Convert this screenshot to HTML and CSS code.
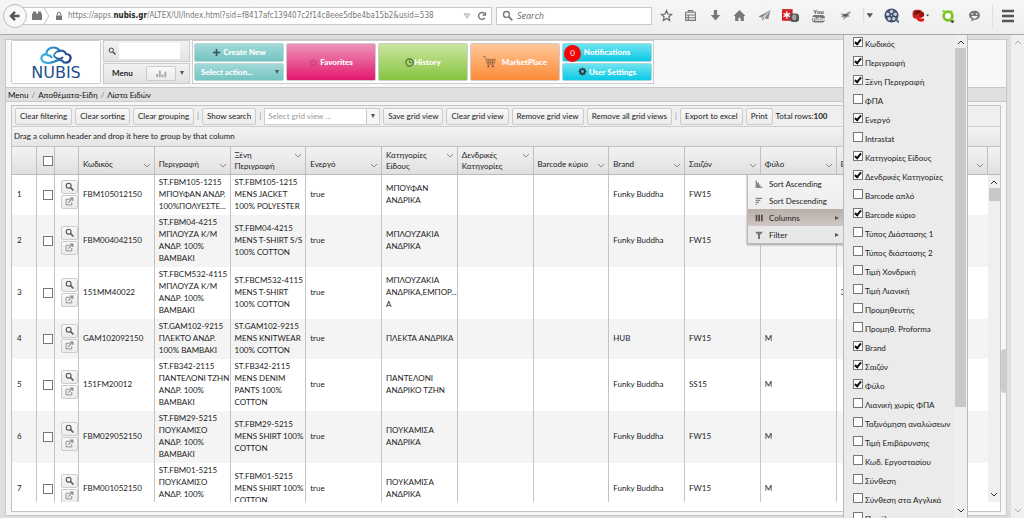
FILE: index.html
```html
<!DOCTYPE html>
<html lang="el">
<head>
<meta charset="utf-8">
<title>Λίστα Ειδών</title>
<link rel="stylesheet" href="styles.css">
</head>
<body>
<svg class="defs" aria-hidden="true">
  <symbol id="mag" viewBox="0 0 16 16"><circle cx="6.5" cy="6.5" r="4.3" fill="none" stroke="currentColor" stroke-width="2"/><path d="M10 10l5 5" stroke="currentColor" stroke-width="2.6"/></symbol>
  <symbol id="ext" viewBox="0 0 16 16"><path d="M9 4H2v10h10V9" fill="none" stroke="currentColor" stroke-width="1.600"/><path d="M6 10l7-7M9 2h5v5" fill="none" stroke="currentColor" stroke-width="2"/></symbol>
  <symbol id="chev" viewBox="0 0 8 6"><path d="M1 1l3 3 3-3" fill="none" stroke="currentColor"/></symbol>
  <symbol id="gear" viewBox="0 0 16 16"><circle cx="8" cy="8" r="4" fill="none" stroke="currentColor" stroke-width="3"/><path d="M8 1v3M8 12v3M1 8h3M12 8h3M3 3l2 2M11 11l2 2M13 3l-2 2M5 11l-2 2" stroke="currentColor" stroke-width="2.400"/></symbol>
</svg>

<header class="browser">
  <button class="back" aria-label="Back"><svg viewBox="0 0 24 24"><path d="M20 12H6M12 5l-7 7 7 7" fill="none" stroke="#555" stroke-width="4"/></svg></button>
  <div class="address">
    <svg class="ident" viewBox="0 0 24 24"><path d="M2 7h20v13H2zM4 3h6v4H4zM14 3h6v4h-6z" fill="#777"/></svg>
    <svg class="sep" viewBox="0 0 6 18"><path d="M0 0l5 9-5 9" fill="none" stroke="#bbb"/></svg>
    <svg class="lock" viewBox="0 0 16 18"><path d="M2 8h12v9H2z" fill="#777"/><path d="M4.500 8V5a3.500 3.500 0 0 1 7 0v3" fill="none" stroke="#777" stroke-width="2"/></svg>
    <span class="url">https://apps.<b>nubis.gr</b>/ALTEX/UI/Index.html?sid=f8417afc139407c2f14c8eee5dbe4ba15b2&amp;usid=538</span>
    <svg class="tri" viewBox="0 0 10 8"><path d="M1 1h8L5 7z" fill="#ddd" stroke="#aaa"/></svg>
    <svg class="reload" viewBox="0 0 16 16"><path d="M12.500 11A5.500 5.500 0 1 1 12 4" fill="none" stroke="#777" stroke-width="2.200"/><path d="M14.500 1v6.500H8z" fill="#777"/></svg>
  </div>
  <label class="find"><svg viewBox="0 0 16 16"><use href="#mag"/></svg><input type="text" placeholder="Search" aria-label="Search"></label>
  <nav class="tools">
    <svg viewBox="0 0 24 24"><path d="M12 3l2.700 6.300 6.800.6-5.100 4.500 1.500 6.700L12 17.600l-5.900 3.500 1.500-6.700L2.500 9.900l6.800-.6z" fill="none" stroke="#666" stroke-width="2.200"/></svg>
    <svg viewBox="0 0 24 24"><path d="M3 6h18v15H3zM8 6V3h8v3M3 11h18M3 16h18M8 11v10" fill="none" stroke="#777" stroke-width="2"/></svg>
    <svg viewBox="0 0 24 24"><path d="M9 2h6v9h6l-9 10-9-10h6z" fill="#777"/></svg>
    <svg viewBox="0 0 24 24"><path d="M12 2l11 11h-3v9h-6v-6h-4v6H4v-9H1z" fill="#777"/></svg>
    <svg viewBox="0 0 24 24"><path d="M23 2L1 14l6 2zM23 2l-4 17-9-3zM23 2L8 17v5z" fill="#888"/></svg>
    <svg class="wide" viewBox="0 0 32 26"><path d="M0 1h20v22H0z" fill="#d4202a"/><path d="M9 5v14M3 9l12 6M3 15l12-6" stroke="#fff" stroke-width="2.500"/><rect x="15" y="9" width="17" height="16" rx="6" fill="#555"/><rect x="20" y="12" width="6" height="9" rx="3" fill="#999" stroke="#ddd"/></svg>
    <svg class="wide" viewBox="0 0 32 28"><text x="16" y="12" class="yt" fill="#444">You</text><rect x="4" y="13" width="24" height="14" rx="5" fill="#777"/><text x="16" y="24" class="yt" fill="#fff">Tube</text></svg>
    <svg viewBox="0 0 24 24"><path d="M3 8l8 1 9-5 2 2-5 5 4 2-8 3-6 4 2-5-6 0 3-3z" fill="#999"/><path d="M9 9l8 1-3 4-6-1z" fill="#555"/></svg>
    <svg class="caret" viewBox="0 0 14 20"><path d="M1 0v20" stroke="#ccc"/><path d="M5 7h9l-4.500 6z" fill="#555"/></svg>
    <svg class="reel" viewBox="0 0 32 32"><path d="M20 25h8v5" fill="none" stroke="#536581" stroke-width="3"/><circle cx="15" cy="15" r="14" fill="#3f4f6b"/><g fill="#c8d2df"><circle cx="15" cy="7" r="3.500"/><circle cx="22.500" cy="12.500" r="3.500"/><circle cx="19.500" cy="21.500" r="3.500"/><circle cx="10.500" cy="21.500" r="3.500"/><circle cx="7.500" cy="12.500" r="3.500"/><circle cx="15" cy="15" r="1.500"/></g></svg>
    <svg class="wide" viewBox="0 0 32 26"><rect x="1" y="2" width="19" height="17" rx="7" fill="#c22a20"/><path d="M4 12q6-6 13-3M5 7q5-3 10-1" stroke="#501414" stroke-width="2.500" fill="none"/><path d="M7 14q7 7 15 4l1 5q-8 4-13-1z" fill="#e01818"/><circle cx="18" cy="11" r="5" fill="#a11"/><path d="M27 11h5l-2.500 4z" fill="#333"/></svg>
    <svg class="reel" viewBox="0 0 24 24"><circle cx="12" cy="12" r="6.500" fill="#fff" stroke="#7cc221" stroke-width="4"/><path d="M4 4l4 2M18 4l-2 3M16 16l4 4" stroke="#8ed02b" stroke-width="3"/><path d="M15 19h7l-3.500 4z" fill="#333"/></svg>
    <svg viewBox="0 0 24 24"><path d="M12 3c6 0 10 3.500 10 8.500S18 20 12 20l-6 3 1-4.500C4 17 2 14.500 2 11.500 2 6.500 6 3 12 3z" fill="#777"/><circle cx="8" cy="9" r="1.500" fill="#eee"/><circle cx="16" cy="9" r="1.500" fill="#eee"/><path d="M6 13h12q-2 5-6 5t-6-5z" fill="#eee"/></svg>
    <svg class="burger" viewBox="0 0 22 22"><path d="M0 0v22" stroke="#ccc"/><path d="M10 6h12M10 11h12M10 16h12" stroke="#555" stroke-width="2.400"/></svg>
  </nav>
</header>

<div class="viewport">
  <main class="page">
    <div class="top">
      <a class="logo" href="#" aria-label="NUBIS">
        <svg viewBox="0 0 32 19"><defs><linearGradient id="g" x1="0" x2="1"><stop offset="0" stop-color="#35b4e4"/><stop offset=".5" stop-color="#2b7fbd"/><stop offset="1" stop-color="#243a82"/></linearGradient></defs><path d="M8 17C3 17 1 14 1.500 11.500 2 9 4 8 6.500 8.500 6 4 9.500 1.500 13.500 1.500c3 0 5 1.500 6 3.500 3-1 6 .5 6.500 3 3 0 5 2 4.500 4.500-.5 3-3 4.500-6.500 4-1-2-3-2.500-5-2.500-3 0-4 3-11 3z" fill="none" stroke="url(#g)" stroke-width="2.200"/><path d="M7 9c2 0 4 1 5 3M20 5c-3 0-6 2-6 5 2 3 7 4 9 1" fill="none" stroke="url(#g)" stroke-width="1.800"/></svg>
        <span>NUBIS</span>
      </a>
      <div class="quick">
        <label class="quick-search"><svg viewBox="0 0 16 16"><use href="#mag"/></svg><input type="text" aria-label="Αναζήτηση"></label>
        <div class="quick-menu"><b>Menu</b><button class="chart" aria-label="Charts"><svg viewBox="0 0 20 16"><path d="M2 15V9M7 15V3M12 15v-5M17 15V5" stroke="#aaa" stroke-width="3.500"/></svg></button><i class="arrow"></i></div>
      </div>
      <div class="tiles">
        <div class="pair teal"><button><svg viewBox="0 0 10 10"><path d="M5 1v8M1 5h8" stroke="#355" stroke-width="1.800"/></svg>Create New</button><button class="action">Select action...<i class="arrow"></i></button></div>
        <button class="tile pink"><svg viewBox="0 0 24 24"><path d="M12 3l2.700 6.300 6.800.6-5.100 4.500 1.500 6.700L12 17.600l-5.900 3.500 1.500-6.700L2.500 9.900l6.800-.6z" fill="none" stroke="#a3476b" stroke-width="2"/></svg>Favorites</button>
        <button class="tile green"><svg viewBox="0 0 16 16"><circle cx="8" cy="8" r="6.500" fill="none" stroke="#4d6a2b" stroke-width="2"/><path d="M8 4v4h4" fill="none" stroke="#4d6a2b" stroke-width="1.500"/></svg>History</button>
        <button class="tile orange"><svg class="cart" viewBox="0 0 24 22"><path d="M0 1h4l4 14h12l3-9H6M7 9h14M8 12h12M10 6v9M14 6v9M18 6v9" fill="none" stroke="#9b6a48" stroke-width="1.500"/><circle cx="10" cy="19" r="2" fill="#845"/><circle cx="18" cy="19" r="2" fill="#845"/></svg>MarketPlace</button>
        <div class="pair cyan"><button>Notifications<span class="badge">0</span></button><button><svg viewBox="0 0 16 16"><use href="#gear"/></svg>User Settings</button></div>
      </div>
    </div>
    <nav class="crumbs"><a href="#">Menu</a> <i>/</i> <a href="#">Αποθέματα-Είδη</a> <i>/</i> <a href="#">Λίστα Ειδών</a></nav>

    <section class="grid">
      <div class="toolbar">
        <button>Clear filtering</button><button>Clear sorting</button><button>Clear grouping</button><i class="bar">|</i><button>Show search</button><i class="bar">|</i>
        <div class="combo"><input type="text" placeholder="Select grid view ..." aria-label="Grid view"><button aria-label="Open"><i class="arrow"></i></button></div>
        <button>Save grid view</button><button>Clear grid view</button><button>Remove grid view</button><button>Remove all grid views</button><i class="bar">|</i><button>Export to excel</button><button>Print</button><span>Total rows:<b>100</b></span>
      </div>
      <div class="grouping">Drag a column header and drop it here to group by that column</div>
      <div class="head">
        <table>
          <colgroup><col class="n"><col class="c"><col class="o"><col span="12"></colgroup>
          <tr><th></th><th><input type="checkbox" aria-label="Select all"></th><th></th>
          <th><div>Κωδικός<svg><use href="#chev"/></svg></div></th>
          <th><div>Περιγραφή<svg><use href="#chev"/></svg></div></th>
          <th><div class="two">Ξένη<br>Περιγραφή<svg><use href="#chev"/></svg></div></th>
          <th><div>Ενεργό<svg><use href="#chev"/></svg></div></th>
          <th><div class="two">Κατηγορίες<br>Είδους<svg><use href="#chev"/></svg></div></th>
          <th><div class="two">Δενδρικές<br>Κατηγορίες<svg><use href="#chev"/></svg></div></th>
          <th><div>Barcode κύριο<svg><use href="#chev"/></svg></div></th>
          <th><div>Brand<svg><use href="#chev"/></svg></div></th>
          <th><div>Σαιζόν<svg><use href="#chev"/></svg></div></th>
          <th><div>Φύλο<svg><use href="#chev"/></svg></div></th>
          <th><div>Εποχή<svg><use href="#chev"/></svg></div></th>
          <th><div>&nbsp;<svg><use href="#chev"/></svg></div></th></tr>
        </table>
      </div>
      <div class="body">
        <div class="rows">
          <table>
            <colgroup><col class="n"><col class="c"><col class="o"><col span="12"></colgroup>
            <tr><td>1</td><td><input type="checkbox" aria-label="1"></td><td><button aria-label="View"><svg><use href="#mag"/></svg></button><button aria-label="Open"><svg><use href="#ext"/></svg></button></td><td>FBM105012150</td><td>ST.FBM105-1215<br>ΜΠΟΥΦΑΝ ΑΝΔΡ.<br>100%ΠΟΛΥΕΣΤΕ...</td><td>ST.FBM105-1215<br>MENS JACKET<br>100% POLYESTER</td><td>true</td><td>ΜΠΟΥΦΑΝ<br>ΑΝΔΡΙΚΑ</td><td></td><td></td><td>Funky Buddha</td><td>FW15</td><td></td><td></td><td></td></tr>
            <tr><td>2</td><td><input type="checkbox" aria-label="2"></td><td><button aria-label="View"><svg><use href="#mag"/></svg></button><button aria-label="Open"><svg><use href="#ext"/></svg></button></td><td>FBM004042150</td><td>ST.FBM04-4215<br>ΜΠΛΟΥΖΑ Κ/Μ<br>ΑΝΔΡ. 100%<br>ΒΑΜΒΑΚΙ</td><td>ST.FBM04-4215<br>MENS T-SHIRT S/S<br>100% COTTON</td><td>true</td><td>ΜΠΛΟΥΖΑΚΙΑ<br>ΑΝΔΡΙΚΑ</td><td></td><td></td><td>Funky Buddha</td><td>FW15</td><td></td><td></td><td></td></tr>
            <tr><td>3</td><td><input type="checkbox" aria-label="3"></td><td><button aria-label="View"><svg><use href="#mag"/></svg></button><button aria-label="Open"><svg><use href="#ext"/></svg></button></td><td>151MM40022</td><td>ST.FBCM532-4115<br>ΜΠΛΟΥΖΑ Κ/Μ<br>ΑΝΔΡ. 100%<br>ΒΑΜΒΑΚΙ</td><td>ST.FBCM532-4115<br>MENS T-SHIRT<br>100% COTTON</td><td>true</td><td>ΜΠΛΟΥΖΑΚΙΑ<br>ΑΝΔΡΙΚΑ,ΕΜΠΟΡ...<br>Α</td><td></td><td></td><td></td><td></td><td></td><td>3</td><td></td></tr>
            <tr><td>4</td><td><input type="checkbox" aria-label="4"></td><td><button aria-label="View"><svg><use href="#mag"/></svg></button><button aria-label="Open"><svg><use href="#ext"/></svg></button></td><td>GAM102092150</td><td>ST.GAM102-9215<br>ΠΛΕΚΤΟ ΑΝΔΡ.<br>100% ΒΑΜΒΑΚΙ</td><td>ST.GAM102-9215<br>MENS KNITWEAR<br>100% COTTON</td><td>true</td><td>ΠΛΕΚΤΑ ΑΝΔΡΙΚΑ</td><td></td><td></td><td>HUB</td><td>FW15</td><td>M</td><td></td><td></td></tr>
            <tr><td>5</td><td><input type="checkbox" aria-label="5"></td><td><button aria-label="View"><svg><use href="#mag"/></svg></button><button aria-label="Open"><svg><use href="#ext"/></svg></button></td><td>151FM20012</td><td>ST.FB342-2115<br>ΠΑΝΤΕΛΟΝΙ ΤΖΗΝ<br>ΑΝΔΡ. 100%<br>ΒΑΜΒΑΚΙ</td><td>ST.FB342-2115<br>MENS DENIM<br>PANTS 100%<br>COTTON</td><td>true</td><td>ΠΑΝΤΕΛΟΝΙ<br>ΑΝΔΡΙΚΟ ΤΖΗΝ</td><td></td><td></td><td>Funky Buddha</td><td>SS15</td><td>M</td><td></td><td></td></tr>
            <tr><td>6</td><td><input type="checkbox" aria-label="6"></td><td><button aria-label="View"><svg><use href="#mag"/></svg></button><button aria-label="Open"><svg><use href="#ext"/></svg></button></td><td>FBM029052150</td><td>ST.FBM29-5215<br>ΠΟΥΚΑΜΙΣΟ<br>ΑΝΔΡ. 100%<br>ΒΑΜΒΑΚΙ</td><td>ST.FBM29-5215<br>MENS SHIRT 100%<br>COTTON</td><td>true</td><td>ΠΟΥΚΑΜΙΣΑ<br>ΑΝΔΡΙΚΑ</td><td></td><td></td><td>Funky Buddha</td><td>FW15</td><td>M</td><td></td><td></td></tr>
            <tr><td>7</td><td><input type="checkbox" aria-label="7"></td><td><button aria-label="View"><svg><use href="#mag"/></svg></button><button aria-label="Open"><svg><use href="#ext"/></svg></button></td><td>FBM001052150</td><td>ST.FBM01-5215<br>ΠΟΥΚΑΜΙΣΟ<br>ΑΝΔΡ. 100%<br>&nbsp;</td><td>ST.FBM01-5215<br>MENS SHIRT 100%<br>COTTON</td><td>true</td><td>ΠΟΥΚΑΜΙΣΑ<br>ΑΝΔΡΙΚΑ</td><td></td><td></td><td>Funky Buddha</td><td>FW15</td><td>M</td><td></td><td></td></tr>
          </table>
        </div>
        <div class="scroll"><svg class="up"><use href="#chev"/></svg><i class="thumb"></i><svg><use href="#chev"/></svg></div>
      </div>
    </section>
    <i class="handle"></i>
  </main>
  <div class="scroll outer"><svg class="up"><use href="#chev"/></svg><svg><use href="#chev"/></svg></div>
</div>

<div class="context">
  <button><svg viewBox="0 0 12 12"><path d="M1 1h2v11H1zM3 4h3v8H3zM6 7h2v5H6zM8 10h3v2H8z" fill="#888"/></svg>Sort Ascending</button>
  <button><svg viewBox="0 0 12 12"><path d="M1 1h10v2H1zM1 4h7v2H1zM1 7h5v2H1zM1 10h2v2H1z" fill="#888"/></svg>Sort Descending</button>
  <button class="on"><svg viewBox="0 0 12 12"><path d="M1 1h2.500v10H1zM5 1h2.500v10H5zM9 1h2.500v10H9z" fill="#544"/></svg>Columns<i class="more"></i></button>
  <button><svg viewBox="0 0 12 12"><path d="M0 1h12L7.500 6v6h-3V6z" fill="#777"/></svg>Filter<i class="more"></i></button>
</div>
<div class="columns">
  <div class="list">
    <label><input type="checkbox" checked>Κωδικός</label>
    <label><input type="checkbox" checked>Περιγραφή</label>
    <label><input type="checkbox" checked>Ξένη Περιγραφή</label>
    <label><input type="checkbox">ΦΠΑ</label>
    <label><input type="checkbox" checked>Ενεργό</label>
    <label><input type="checkbox">Intrastat</label>
    <label><input type="checkbox" checked>Κατηγορίες Είδους</label>
    <label><input type="checkbox" checked>Δενδρικές Κατηγορίες</label>
    <label><input type="checkbox">Barcode απλό</label>
    <label><input type="checkbox" checked>Barcode κύριο</label>
    <label><input type="checkbox">Τύπος Διάστασης 1</label>
    <label><input type="checkbox">Τύπος διάστασης 2</label>
    <label><input type="checkbox">Τιμή Χονδρική</label>
    <label><input type="checkbox">Τιμή Λιανική</label>
    <label><input type="checkbox">Προμηθευτής</label>
    <label><input type="checkbox">Προμηθ. Proforma</label>
    <label><input type="checkbox" checked>Brand</label>
    <label><input type="checkbox" checked>Σαιζόν</label>
    <label><input type="checkbox" checked>Φύλο</label>
    <label><input type="checkbox">Λιανική χωρίς ΦΠΑ</label>
    <label><input type="checkbox">Ταξινόμηση αναλώσεων</label>
    <label><input type="checkbox">Τιμή Επιβάρυνσης</label>
    <label><input type="checkbox">Κωδ. Εργοστασίου</label>
    <label><input type="checkbox">Σύνθεση</label>
    <label><input type="checkbox">Σύνθεση στα Αγγλικά</label>
    <label><input type="checkbox">Προέλευση</label>
  </div>
  <div class="scroll"><svg class="up"><use href="#chev"/></svg><i class="thumb"></i><svg><use href="#chev"/></svg></div>
</div>
</body>
</html>
```
FILE: styles.css
```css
*, *::before { box-sizing: border-box; }
body { margin: 0; height: 100vh; overflow: hidden; display: flex; flex-direction: column; background: #dedede; color: #222; font: 8px/12px Lato, "Noto Sans", sans-serif; }
button, input { font: inherit; color: inherit; margin: 0; padding: 0; }
button { border: 1px solid #ccc; border-radius: 2px; background: linear-gradient(#f8f8f8, #ebebeb); white-space: nowrap; }
i { font-style: normal; }
a { color: inherit; text-decoration: none; }
svg { flex: none; }
.defs { display: none; }

input[type=checkbox] { appearance: none; flex: none; display: block; width: 10px; height: 10px; border: 1px solid #777; background: #fff; }
input[type=checkbox]:checked::before { content: ""; display: block; width: 4px; height: 7px; margin: 0 0 0 2px; border: solid #111; border-width: 0 2px 2px 0; transform: rotate(40deg); }
.arrow { display: block; border: solid transparent; border-width: 4px 2px 0; border-top-color: #555; }

/* browser chrome */
.browser { flex: none; height: 35px; display: flex; align-items: center; padding: 0 10px 3px 3px; background: linear-gradient(#f6f6f6, #eee); border-bottom: 1px solid #aaa; font-family: "Open Sans", sans-serif; }
.back { z-index: 1; flex: none; width: 24px; height: 24px; border-radius: 50%; border-color: #bbb; background: #f8f8f8; display: grid; place-items: center; }
.back svg { width: 14px; height: 14px; }
.address { flex: none; width: 472px; height: 18px; margin-left: -7px; padding: 0 4px 0 10px; display: flex; align-items: center; background: #fff; border: 1px solid #c8c8c8; }
.ident { width: 12px; height: 12px; }
.sep { width: 6px; height: 16px; margin-left: 1px; }
.lock { width: 8px; height: 10px; margin: 0 5px; }
.url { flex: 1; overflow: hidden; white-space: nowrap; font: 8px/12px "DejaVu Sans Condensed", "Open Sans", sans-serif; color: #777; }
.url b { color: #222; font-weight: 700; }
.tri { width: 8px; height: 6px; margin: 0 6px 0 5px; }
.reload { width: 10px; height: 10px; }
.find { flex: none; width: 156px; height: 18px; margin-left: 4px; padding-left: 5px; display: flex; align-items: center; gap: 4px; background: #fff; border: 1px solid #c8c8c8; color: #777; }
.find svg { width: 11px; height: 11px; }
.find input { flex: 1; min-width: 0; border: 0; background: none; font-size: 9px; }
.find input::placeholder { font-style: italic; color: #666; }
.tools { flex: 1; display: flex; align-items: center; justify-content: space-between; padding-left: 8px; }
.tools svg { width: 13px; height: 13px; }
.tools .wide { width: 17px; height: 15px; }
.tools .reel { width: 16px; height: 16px; }
.tools .caret { width: 10px; height: 15px; }
.tools .burger { width: 22px; height: 22px; }
.yt { font: bold 11px "Liberation Sans", sans-serif; text-anchor: middle; }

/* page */
.viewport { flex: 1; min-height: 0; display: flex; padding: 4px 0 2px 5px; gap: 4px; }
.page { flex: 1; min-width: 0; position: relative; display: flex; flex-direction: column; background: #f6f6f6; border: 1px solid #c8c8c8; }
.top { flex: none; height: 47px; padding: 0 5px; display: flex; gap: 2px; background: #f7f8f8; }
.logo { width: 90px; height: 44px; display: flex; flex-direction: column; align-items: center; background: #fff; border: 1px solid #ccc; border-radius: 2px; color: #24508c; font: 16px/16px "DejaVu Sans", sans-serif; padding-top: 5px; }
.logo svg { width: 32px; height: 19px; }
.quick { width: 87px; height: 44px; display: flex; flex-direction: column; gap: 1px; }
.quick > * { flex: 1; display: flex; align-items: center; border: 1px solid #ccc; background: linear-gradient(#f2f2f2, #e2e2e2); }
.quick-search { gap: 3px; padding: 0 9px 0 4px; }
.quick-search svg { width: 8px; height: 8px; color: #444; }
.quick-search input { flex: 1; min-width: 0; height: 16px; border: 0; background: #fff; }
.quick-menu { padding: 0 5px 0 8px; justify-content: space-between; }
.chart { width: 30px; height: 15px; margin-left: 10px; display: grid; place-items: center; }
.chart svg { width: 11px; height: 9px; }
.tiles { height: 44px; padding: 2px 1px; display: flex; gap: 2px; background: #fff; border: 1px solid #ccc; }
.tiles > * { width: 90px; }
.tiles button { display: flex; align-items: center; justify-content: center; gap: 2px; color: #fff; font-weight: 900; }
.tiles svg { width: 9px; height: 9px; color: #334; }
.tiles .cart { width: 13px; height: 12px; margin-right: 4px; }
.pair { display: flex; flex-direction: column; gap: 1px; }
.pair button { flex: 1; position: relative; }
.teal button { background: linear-gradient(#a2d9d8, #74c4c2); border-color: #b8d8d8; }
.cyan button { background: linear-gradient(#6fe3f0, #0bc9e6); border-color: #a5d8e0; }
.teal .action { justify-content: space-between; padding: 0 4px 0 6px; }
.tiles .pink { background: linear-gradient(#ee94bb, #e2186d); }
.tiles .green { background: linear-gradient(#cbe59f, #86c440); gap: 0; }
.tiles .orange { background: linear-gradient(#ffc799, #fd8b38); }
.badge { position: absolute; left: 1px; top: 1px; width: 17px; height: 17px; border-radius: 50%; background: #f20505; font-weight: 400; line-height: 17px; }
.crumbs { flex: none; height: 15px; padding-left: 2px; line-height: 14px; background: #e0e0e0; border: solid #c8c8c8; border-width: 1px 0; color: #111; }
.crumbs i { color: #777; margin: 0 1px; }
.handle { position: absolute; right: -1px; top: 309px; width: 6px; height: 44px; border-radius: 4px 0 0 4px; background: #ccc; }

/* grid */
.grid { flex: 1; min-height: 0; display: flex; flex-direction: column; margin: 3px 5px; padding-bottom: 9px; background: #fff; border: 1px solid #c4c4c4; }
.toolbar { flex: none; height: 21px; display: flex; align-items: center; gap: 3px; padding: 0 3px; background: #efefef; border-bottom: 1px solid #ccc; white-space: nowrap; }
.toolbar > button { height: 17px; padding: 0 4px; }
.bar { color: #888; width: 2px; text-align: center; }
.combo { width: 116px; height: 17px; display: flex; background: #fff; border: 1px solid #ccc; }
.combo input { flex: 1; min-width: 0; border: 0; padding-left: 3px; background: none; }
.combo input::placeholder { color: #999; }
.combo button { width: 13px; border-width: 0 0 0 1px; border-radius: 0; display: grid; place-items: center; background: #f6f6f6; }
.grouping { flex: none; height: 20px; padding-left: 2px; line-height: 18px; background: linear-gradient(#f3f3f3, #e5e5e5); border-bottom: 1px solid #c4c4c4; white-space: nowrap; }
table { width: 100%; table-layout: fixed; border-collapse: separate; border-spacing: 0; }
.n { width: 25px; }
.c { width: 18px; }
.o { width: 24px; }
.head { flex: none; padding-right: 12px; background: linear-gradient(#f3f3f3, #e0e0e0); border-bottom: 1px solid #bbb; }
th { height: 27px; padding: 0 3px 0 4px; border-right: 1px solid #c0c0c0; font-weight: 400; text-align: left; line-height: 11px; white-space: nowrap; }
th div { position: relative; padding-top: 8px; }
th .two { padding: 0; }
th svg { position: absolute; right: 0; bottom: 1px; width: 8px; height: 6px; color: #888; }
th .two svg { bottom: auto; top: 3px; }
.body { flex: 1; min-height: 0; display: flex; }
.body .scroll { width: 12px; }
.rows { flex: 1; min-width: 0; overflow: hidden; }
td { height: 40px; padding: 1px 0 3px 4px; border-right: 1px solid #c4c4c4; white-space: nowrap; overflow: hidden; }
tr:nth-child(even) td { background: #f4f4f4; }
td:last-child { border-right-color: transparent; }
td:first-child { padding-left: 5px; }
td:nth-child(2), th:nth-child(2) { padding: 0 0 0 6px; }
td button { display: grid; place-items: center; width: 17px; height: 14px; margin: 0 0 0 2px; color: #555; }
td svg { width: 9px; height: 9px; }
td button + button { color: #888; margin-top: 1px; }

.scroll { flex: none; width: 13px; display: flex; flex-direction: column; align-items: center; justify-content: space-between; background: #efefef; color: #333; padding: 4px 0; gap: 3px; }
.scroll svg { width: 8px; height: 6px; }
.scroll .up { transform: rotate(180deg); }
.thumb { width: 11px; height: 13px; margin-bottom: auto; background: #c8c8c8; }
.outer { color: #aaa; background: #f0f0f0; margin: -4px 0 -2px; }

/* menus */
.context { position: absolute; left: 747px; top: 174px; width: 97px; display: flex; flex-direction: column; background: linear-gradient(#f5f5f5, #e6e6e6); border: 1px solid #bbb; box-shadow: 0 1px 2px #999; }
.context button { height: 17px; display: flex; align-items: center; gap: 6px; padding: 0 4px 0 7px; border: 0; border-radius: 0; background: none; }
.context .on { background: linear-gradient(#b8aeaa, #d0c8c4); }
.context svg { width: 8px; height: 8px; }
.more { margin-left: auto; border: solid transparent; border-width: 2px 0 2px 4px; border-left-color: #555; }
.columns { position: absolute; left: 843px; top: 35px; bottom: 0; width: 125px; display: flex; overflow: hidden; background: #ebebeb; border: 1px solid #bbb; border-width: 0 1px; }
.list { flex: 1; min-width: 0; margin-top: -2px; padding: 0 0 0 9px; }
.list label { height: 19px; display: flex; align-items: center; gap: 2px; padding-top: 2px; white-space: nowrap; line-height: 12px; }
.list input { margin-bottom: 3px; }
.columns .scroll .thumb { height: 359px; }
```
